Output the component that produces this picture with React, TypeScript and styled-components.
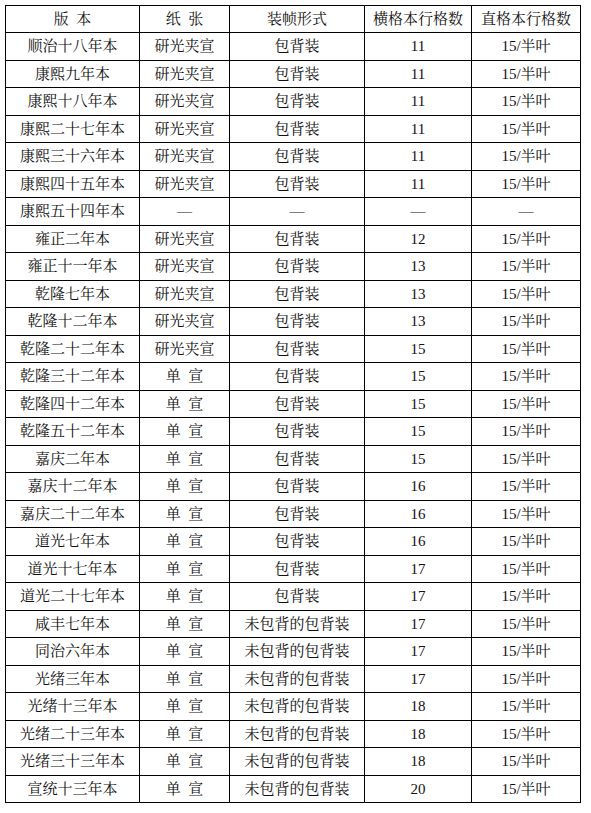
import React from "react";
import styled, { createGlobalStyle } from "styled-components";

const Global = createGlobalStyle`
  html, body { margin: 0; padding: 0; background: #ffffff; }
  body {
    font-family: "Liberation Serif", "Noto Serif CJK SC", "Noto Sans CJK SC", serif;
    color: #000;
  }
`;

const Page = styled.div`
  padding: 5px 0 0 5px;
  width: 591px;
  box-sizing: border-box;
`;

const Table = styled.table`
  border-collapse: collapse;
  table-layout: fixed;
  width: 575px;
  border: 1.5px solid #000;
`;

const Cell = styled.td`
  border: 1.3px solid #000;
  height: 26.5px;
  padding: 0;
  text-align: center;
  vertical-align: middle;
  font-size: 15px;
  font-weight: 400;
  line-height: 26px;
  white-space: nowrap;
  color: #111;
`;

const HeadCell = styled(Cell).attrs({ as: "th" })`
  height: 26px;
`;

const SPACE = "\u2002";

type Row = [string, string, string, string, string];

const DAN = `单${SPACE}宣`;
const YAN = "研光夹宣";

const data: Row[] = [
  ["顺治十八年本", YAN, "包背装", "11", "15/半叶"],
  ["康熙九年本", YAN, "包背装", "11", "15/半叶"],
  ["康熙十八年本", YAN, "包背装", "11", "15/半叶"],
  ["康熙二十七年本", YAN, "包背装", "11", "15/半叶"],
  ["康熙三十六年本", YAN, "包背装", "11", "15/半叶"],
  ["康熙四十五年本", YAN, "包背装", "11", "15/半叶"],
  ["康熙五十四年本", "—", "—", "—", "—"],
  ["雍正二年本", YAN, "包背装", "12", "15/半叶"],
  ["雍正十一年本", YAN, "包背装", "13", "15/半叶"],
  ["乾隆七年本", YAN, "包背装", "13", "15/半叶"],
  ["乾隆十二年本", YAN, "包背装", "13", "15/半叶"],
  ["乾隆二十二年本", YAN, "包背装", "15", "15/半叶"],
  ["乾隆三十二年本", DAN, "包背装", "15", "15/半叶"],
  ["乾隆四十二年本", DAN, "包背装", "15", "15/半叶"],
  ["乾隆五十二年本", DAN, "包背装", "15", "15/半叶"],
  ["嘉庆二年本", DAN, "包背装", "15", "15/半叶"],
  ["嘉庆十二年本", DAN, "包背装", "16", "15/半叶"],
  ["嘉庆二十二年本", DAN, "包背装", "16", "15/半叶"],
  ["道光七年本", DAN, "包背装", "16", "15/半叶"],
  ["道光十七年本", DAN, "包背装", "17", "15/半叶"],
  ["道光二十七年本", DAN, "包背装", "17", "15/半叶"],
  ["咸丰七年本", DAN, "未包背的包背装", "17", "15/半叶"],
  ["同治六年本", DAN, "未包背的包背装", "17", "15/半叶"],
  ["光绪三年本", DAN, "未包背的包背装", "17", "15/半叶"],
  ["光绪十三年本", DAN, "未包背的包背装", "18", "15/半叶"],
  ["光绪二十三年本", DAN, "未包背的包背装", "18", "15/半叶"],
  ["光绪三十三年本", DAN, "未包背的包背装", "18", "15/半叶"],
  ["宣统十三年本", DAN, "未包背的包背装", "20", "15/半叶"],
];

const header: Row = [`版${SPACE}本`, `纸${SPACE}张`, "装帧形式", "横格本行格数", "直格本行格数"];

const widths = [134, 90, 135, 107, 109];

export default function App() {
  return (
    <Page>
      <Global />
      <Table>
        <colgroup>
          {widths.map((w, i) => (
            <col key={i} width={w} />
          ))}
        </colgroup>
        <thead>
          <tr>
            {header.map((h, i) => (
              <HeadCell key={i}>{h}</HeadCell>
            ))}
          </tr>
        </thead>
        <tbody>
          {data.map((r, ri) => (
            <tr key={ri}>
              {r.map((c, ci) => (
                <Cell key={ci}>{c}</Cell>
              ))}
            </tr>
          ))}
        </tbody>
      </Table>
    </Page>
  );
}
